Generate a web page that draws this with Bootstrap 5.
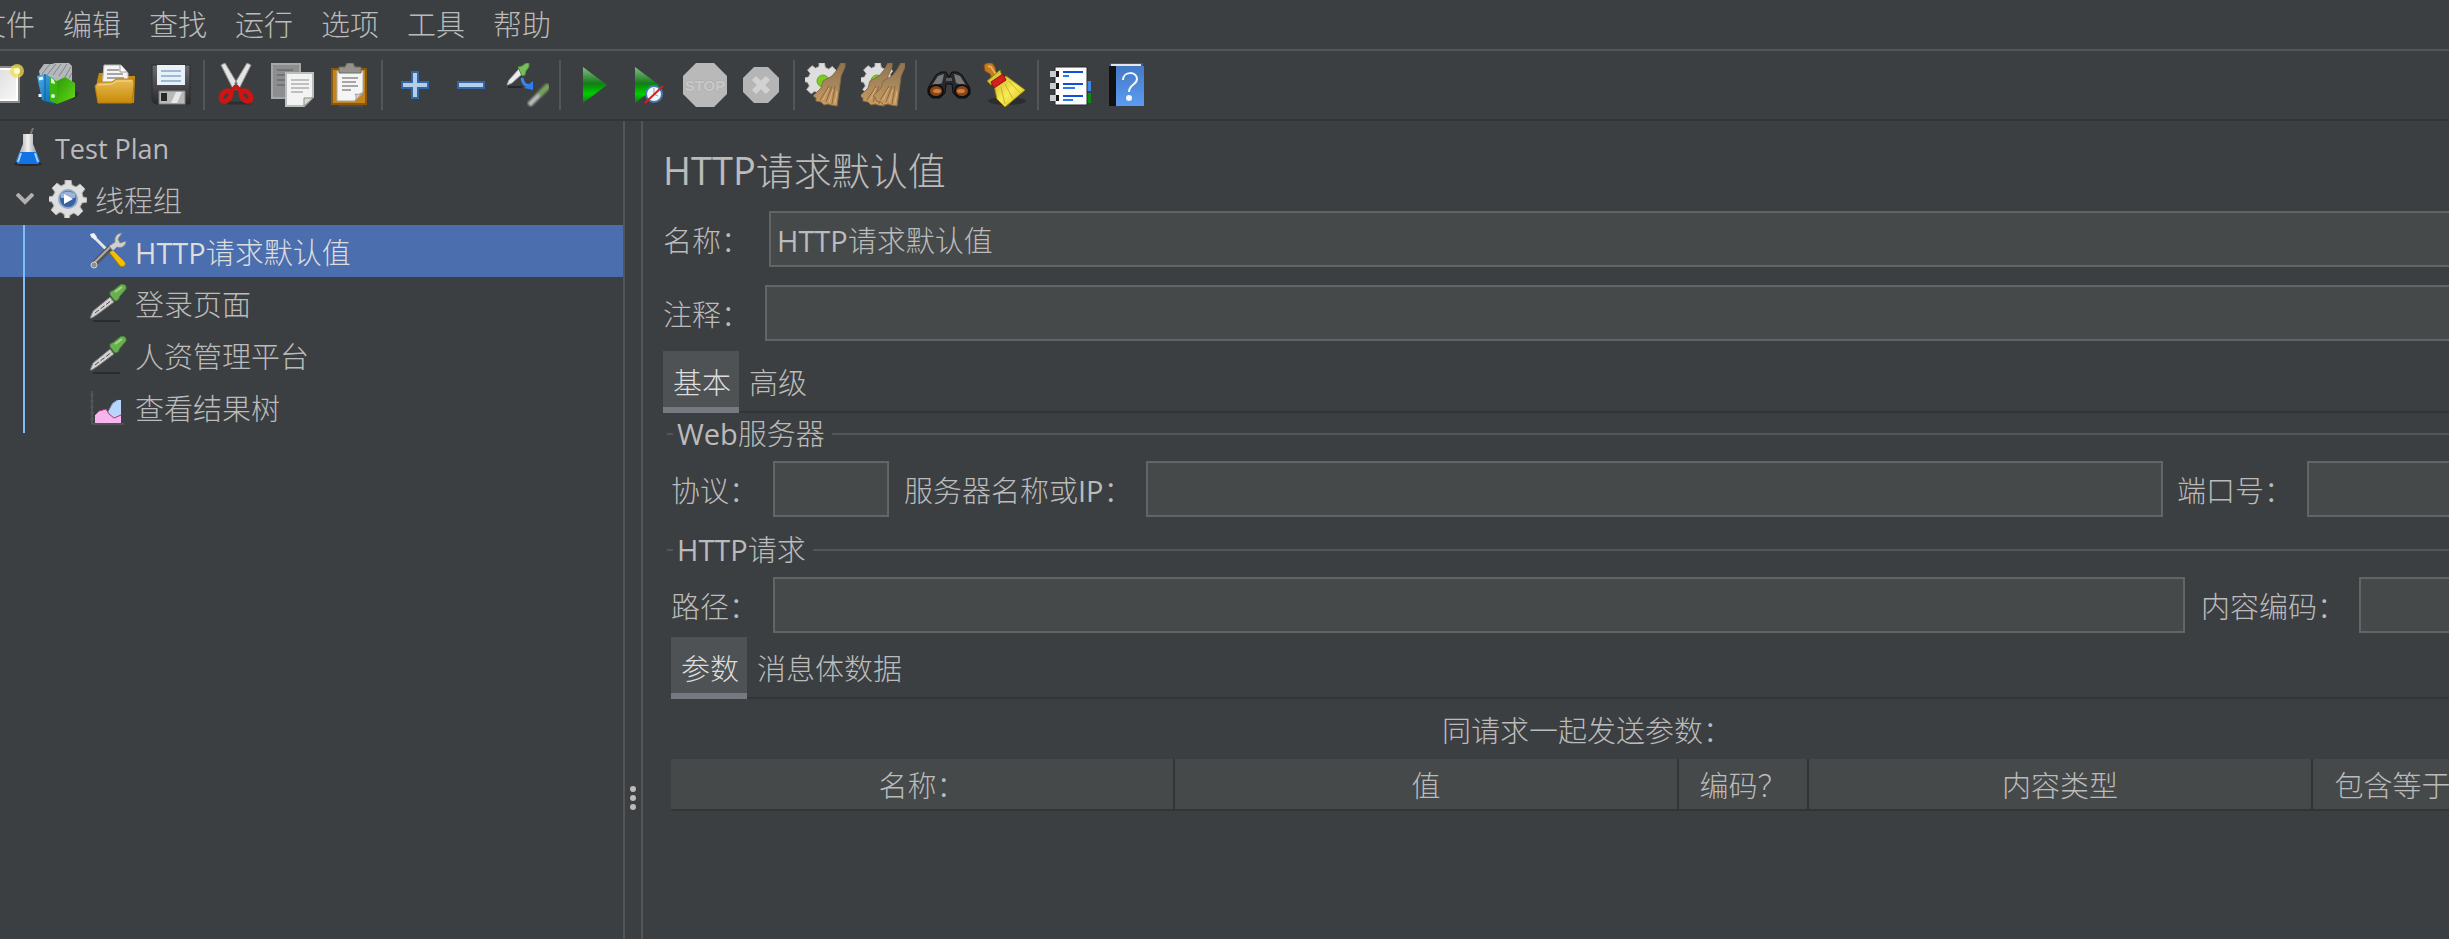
<!DOCTYPE html>
<html lang="zh-CN" data-bs-theme="dark">
<head>
<meta charset="utf-8">
<meta name="viewport" content="width=device-width, initial-scale=1">
<title>HTTP请求默认值 - Test Plan</title>
<link href="https://cdn.jsdelivr.net/npm/bootstrap@5.3.0/dist/css/bootstrap.min.css" rel="stylesheet">
<style>
  :root { --pane: #3c3f41; --ink: #bbbbbb; --rule: #555555; --edge: #323537; --field: #45494a; }
  body { background: var(--pane); color: var(--ink); font-family: "Open Sans", "Noto Sans CJK SC Light", "Noto Sans CJK SC", sans-serif; font-size: 29px; line-height: 40px; overflow: hidden; }
  .app-menu { height: 51px; margin-left: -37px; border-bottom: 2px solid var(--rule); }
  .app-menu .nav-link { color: var(--ink); padding: 5px 14px 4px; }
  .tools-bar { height: 70px; border-bottom: 2px solid var(--edge); }
  .tools-row { margin-left: -25px; }
  .tool { width: 56px; height: 56px; padding: 0; border: 0; background: none; flex: none; display: flex; align-items: center; justify-content: center; }
  .tool svg { width: 44px; height: 44px; }
  .tool-rule { width: 2px; height: 50px; margin: 0 4px; background: var(--rule); flex: none; }
  .tree-pane { flex: 0 0 625px; border-right: 2px solid var(--rule); }
  .tree-row { height: 52px; display: flex; align-items: center; gap: 8px; color: var(--ink); text-decoration: none; white-space: nowrap; }
  .tree-row span { padding-top: 3px; }
  .tree-row .latin { font-size: 27px; }
  .tree-row svg { width: 38px; height: 38px; flex: none; }
  .tree-row .twisty { width: 18px; height: 12px; margin-right: 7px; }
  .lvl-a { padding-left: 9px; }
  .lvl-b { padding-left: 16px; }
  .lvl-c { padding-left: 89px; }
  .tree-row.picked { background: #4b6eaf; color: #dddddd; }
  .tree-kids { position: relative; }
  .tree-kids::before { content: ""; position: absolute; left: 23px; top: 0; bottom: 0; width: 2px; background: #7cbcf8; }
  .splitter { flex: 0 0 18px; border-right: 2px solid var(--rule); }
  .splitter .above { flex: 31 0 0; }
  .splitter .below { flex: 6 0 0; }
  .grips { gap: 3px; }
  .grip { width: 6px; height: 6px; border-radius: 50%; background: var(--ink); }
  .editor { min-width: 0; }
  .editor-body { margin-right: -54px; padding: 20px 0 0 20px; }
  h1 { font-size: 38px; line-height: 58px; font-weight: 400; color: var(--ink); margin: 0 0 12px; }
  .form-control, .form-control:focus { background: var(--field); border: 2px solid #646464; border-radius: 0; height: 56px; padding: 0 6px; color: var(--ink); font-size: 29px; box-shadow: none; }
  label { white-space: nowrap; flex: none; padding-top: 3px; }
  .name-row { margin-bottom: 18px; }
  .note-row { margin-bottom: 10px; }
  .w-label { width: 102px; }
  .w-name { width: 106px; }
  .w-proto { flex: 0 0 116px; }
  .w-host { width: 257px; padding-left: 15px; }
  .w-port { width: 144px; padding-left: 14px; }
  .w-enc { width: 174px; padding-left: 16px; }
  .port-field { flex: 0 0 196px; }
  .enc-field { flex: 0 0 144px; }
  .tab-strip { border-bottom: 2px solid var(--edge); height: 62px; }
  .tab-strip button { border: 0; background: none; color: var(--ink); height: 62px; padding: 8px 8px 0 10px; border-bottom: 6px solid transparent; }
  .tab-strip button.active { background: #4e5254; border-bottom-color: #747a80; color: #dddddd; }
  fieldset { padding-left: 8px; }
  .second-group { margin-top: 12px; }
  .group-title { display: flex; align-items: center; gap: 4px; font-size: 29px; line-height: 42px; margin: 0 0 6px -4px; float: none; }
  .group-title::before { content: ""; width: 6px; height: 2px; background: var(--rule); }
  .group-title::after { content: ""; flex: 1; height: 2px; margin-left: 3px; background: var(--rule); }
  .params-title { padding: 12px 0 8px; }
  .params { table-layout: fixed; width: 100%; margin: 0; border-collapse: separate; border-spacing: 0; }
  .params th { background: var(--field); font-weight: 400; text-align: center; height: 52px; padding: 4px 0 0; line-height: 46px; white-space: nowrap; border-bottom: 2px solid var(--edge); border-right: 2px solid var(--edge); }
  .col-wide { width: 504px; }
  .col-code { width: 130px; }
</style>
</head>
<body>
<svg width="0" height="0" class="position-absolute" aria-hidden="true">
  <defs>
    <linearGradient id="gBlue" x1="0" y1="0" x2="1" y2="1"><stop offset="0" stop-color="#4db0ea"/><stop offset="1" stop-color="#0567b0"/></linearGradient>
    <linearGradient id="gLeaf" x1="0" y1="0" x2="1" y2="1"><stop offset="0" stop-color="#2a9a06"/><stop offset="1" stop-color="#66d818"/></linearGradient>
    <linearGradient id="gGold" x1="0" y1="0" x2="0" y2="1"><stop offset="0" stop-color="#e8bd55"/><stop offset="1" stop-color="#c88a08"/></linearGradient>
    <linearGradient id="gPlay" x1="0" y1="0" x2="0" y2="1"><stop offset="0" stop-color="#7fc184"/><stop offset=".45" stop-color="#187a1c"/><stop offset=".55" stop-color="#059a05"/><stop offset=".75" stop-color="#00cf00"/><stop offset="1" stop-color="#0c7a10"/></linearGradient>
    <linearGradient id="gSteel" x1="0" y1="0" x2="1" y2="0"><stop offset="0" stop-color="#8d8d8d"/><stop offset=".5" stop-color="#f2f2f2"/><stop offset="1" stop-color="#777"/></linearGradient>
    <linearGradient id="gDark" x1="0" y1="0" x2="0" y2="1"><stop offset="0" stop-color="#6a6a70"/><stop offset="1" stop-color="#2a2a2c"/></linearGradient>
    <linearGradient id="gPaper" x1="0" y1="0" x2="1" y2="1"><stop offset="0" stop-color="#d8d8d8"/><stop offset="1" stop-color="#fafafa"/></linearGradient>
    <linearGradient id="gBook" x1="0" y1="0" x2="0" y2="1"><stop offset="0" stop-color="#4479c4"/><stop offset="1" stop-color="#5b9cf0"/></linearGradient>
    <linearGradient id="gStraw" x1="0" y1="0" x2="0" y2="1"><stop offset="0" stop-color="#8f7350"/><stop offset=".5" stop-color="#a8875c"/><stop offset="1" stop-color="#cc9c60"/></linearGradient>
    <linearGradient id="gYellow" x1="0" y1="0" x2="1" y2="1"><stop offset="0" stop-color="#c8b018"/><stop offset=".5" stop-color="#f8ea58"/><stop offset="1" stop-color="#d4bc18"/></linearGradient>
    <filter id="soft"><feGaussianBlur stdDeviation="1"/></filter>
    <path id="cog" d="M16 0h6l1 5 4 2 4-3 5 5-3 4 1 4 4 1v4l-5 1-2 4 3 4-5 5-4-3-4 2-1 4h-4l-1-5-4-2-4 3-5-5 3-4-2-4-4-1v-4l5-1 2-4-3-4 5-5 4 3 4-2z"/>
    <g id="pipette">
      <path d="M4 37h27" stroke="#232527" stroke-width="2" opacity=".7"/>
      <path d="M1 34l3-7 17-14 4 5-16 12-6 4z" fill="#d2d2d2" stroke="#757575"/>
      <path d="M6 29l17-13" stroke="#4c4c4c" stroke-width="1" stroke-dasharray="5 2"/>
      <path d="M21 8l4-2 6-5c3-2 7 0 6 4l-6 7-2 4-3 1-5-6z" fill="#6bb050" stroke="#467c38"/>
      <path d="M26 8l7-5" stroke="#a0d880" stroke-width="2"/>
    </g>
    <g id="whisk">
      <path d="M38 0h4v4l-4 9-1 8-3 22-6-1-3-1-4 1-3-3-5-1 0-3-3-2 8-8 2-7 9-5 5-6z" fill="url(#gStraw)" stroke="#8b6c45" stroke-width="1"/>
      <path d="M17 37l9-14M23 39l6-16M29 41l3-18" stroke="#8d6a3c" stroke-width="1"/>
      <path d="M20 37l6-12M26 39l4-13M32 40l2-12" stroke="#dcb27a" stroke-width="1"/>
    </g>
  </defs>
</svg>

<div class="d-flex flex-column vh-100 overflow-hidden">
  <nav class="app-menu nav flex-nowrap text-nowrap flex-shrink-0" aria-label="主菜单">
    <a class="nav-link" href="#">文件</a>
    <a class="nav-link" href="#">编辑</a>
    <a class="nav-link" href="#">查找</a>
    <a class="nav-link" href="#">运行</a>
    <a class="nav-link" href="#">选项</a>
    <a class="nav-link" href="#">工具</a>
    <a class="nav-link" href="#">帮助</a>
  </nav>

  <div class="tools-bar d-flex align-items-center flex-shrink-0">
   <div class="tools-row d-flex align-items-center" role="toolbar" aria-label="工具栏">
    <button class="tool" type="button" aria-label="新建"><svg viewBox="0 0 44 44"><path d="M7 4h31v35H7z" fill="url(#gPaper)" stroke="#8b8d86" stroke-width="2"/><path d="M9 6h27v31H9z" fill="none" stroke="#fff" stroke-width="2"/><circle cx="36" cy="8" r="7" fill="#f0dc50" opacity=".75"/><circle cx="36" cy="8" r="3" fill="#fffbc8"/></svg></button>
    <button class="tool" type="button" aria-label="模板"><svg viewBox="0 0 44 44"><path d="M12 38l26-2 4-6-6-3z" fill="#2c2e30"/><path d="M2 8l5-7h8l3-1h14l3 3v16H4z" fill="#b4b8ba"/><path d="M5 11l8-10M10 12l9-11M16 12l8-11M22 13l8-12M28 14l6-10M32 15l3-5" stroke="#80868a" stroke-width="1"/><path d="M0 13l8-2 9 5v25l-12-4z" fill="url(#gBlue)"/><path d="M8 11v28" stroke="#0a5c9e" stroke-width="1"/><path d="M2 16l4-1M3 31v3" stroke="#e8f6ff" stroke-width="3"/><path d="M12 14l8 4v23l-7-3z" fill="#3cb510"/><path d="M20 18l8-4 10 6v14l-18 7z" fill="url(#gLeaf)"/><path d="M14 15l3 2 1 4-4-1z" fill="#dcffd0"/><circle cx="16" cy="33" r="2" fill="#e4ffe0"/></svg></button>
    <button class="tool" type="button" aria-label="打开"><svg viewBox="0 0 44 44"><path d="M6 10h8v26H4V18zM32 13h10l-1 27H10V20z" fill="#c68b0c"/><path d="M11 2h17l7 8v14H9z" fill="#f4f4f4" stroke="#b4b4b4"/><path d="M14 7h12M14 11h16M14 15h17" stroke="#a5a5a5" stroke-width="2"/><path d="M27 2v7h7" fill="#fff" stroke="#999"/><path d="M2 23l3-4h14l4-3h17l1 4-2 20H5z" fill="url(#gGold)" stroke="#ba7e08"/><path d="M5 22l14-1 5-3h15" fill="none" stroke="#f5d98c" stroke-width="1"/></svg></button>
    <button class="tool" type="button" aria-label="保存"><svg viewBox="0 0 44 44"><path d="M3 2h38v39H6l-3-3z" fill="url(#gDark)" stroke="#2c2c2e"/><path d="M8 2h28v20H8z" fill="#e8f0f8"/><path d="M12 8h20M12 13h20M12 18h20" stroke="#9eb9d4" stroke-width="2"/><path d="M10 28h26v13H10z" fill="#b9b9b9" stroke="#808080"/><path d="M12 30h6v8h-6z" fill="#29292b"/><path d="M22 40l5-11h6l-5 11z" fill="#e7e7e7"/></svg></button>
    <span class="tool-rule"></span>
    <button class="tool" type="button" aria-label="剪切"><svg viewBox="0 0 44 44"><path d="M12 40h24" stroke="#2c2e30" stroke-width="3"/><path d="M6 2l4-2 12 20v6h-4zM36 2l-4-2-12 20v6h4z" fill="#e4e4e2" stroke="#8e8e8c" stroke-width="1"/><g fill="none" stroke="#cf1414" stroke-width="5"><ellipse cx="11" cy="33" rx="4" ry="6" transform="rotate(40 11 33)"/><ellipse cx="31" cy="33" rx="4" ry="6" transform="rotate(-40 31 33)"/></g><path d="M15 30l5-6h2l5 6" fill="none" stroke="#cf1414" stroke-width="4"/></svg></button>
    <button class="tool" type="button" aria-label="复制"><svg viewBox="0 0 44 44"><path d="M1 1h28v34H1z" fill="#8c8e8f" stroke="#a6a7a8" stroke-width="2"/><path d="M6 7h16M6 12h10M6 17h10M6 22h8" stroke="#727475" stroke-width="2"/><path d="M15 10h27v24l-9 9H15z" fill="#f3f3f3" stroke="#bcbebc" stroke-width="2"/><path d="M20 17h18M20 21h18M20 25h18M20 29h12" stroke="#c0c0c0" stroke-width="2"/><path d="M33 43v-8h9z" fill="#d9dbd6" stroke="#8b8d84"/></svg></button>
    <button class="tool" type="button" aria-label="粘贴"><svg viewBox="0 0 44 44"><path d="M12 43h24" stroke="#53575a" stroke-width="1"/><path d="M5 6h34v35H5z" fill="#c3831f" stroke="#88590c" stroke-width="2"/><path d="M10 8h26v22l-8 8H10z" fill="#f5f5f5" stroke="#a9a9a9"/><path d="M15 15h16M15 19h14M15 23h16M15 27h9" stroke="#a6a6a6" stroke-width="2"/><path d="M28 38c2-3 1-6 0-7 3 1 6 0 8-2z" fill="#d7d7d7" stroke="#999"/><path d="M12 4h6l2-4h6l2 4h6v6H12z" fill="#93938b" stroke="#6c6d66" stroke-width="1"/></svg></button>
    <span class="tool-rule"></span>
    <button class="tool" type="button" aria-label="展开"><svg viewBox="0 0 44 44"><path d="M19 9h6v10h10v6H25v10h-6V25H9v-6h10z" fill="#b4cde8" stroke="#3465a4" stroke-width="2"/></svg></button>
    <button class="tool" type="button" aria-label="折叠"><svg viewBox="0 0 44 44"><path d="M9 19h26v6H9z" fill="#b4cde8" stroke="#3465a4" stroke-width="2"/></svg></button>
    <button class="tool" type="button" aria-label="切换"><svg viewBox="0 0 44 44"><path d="M3 24h14" stroke="#25282a" stroke-width="2"/><path d="M2 22l2-5L14 6l4 4L7 20z" fill="#ededed" stroke="#a6a6a6" stroke-width="1"/><path d="M13 4l4-1 4-3h3v4l-3 4-1 4-3 1z" fill="#79bd5c" stroke="#4a8938" stroke-width="1"/><path d="M17 15q1 8 8 8" fill="none" stroke="#3a86f2" stroke-width="3"/><path d="M28 27l-9-2 9-7z" fill="#2f7df4"/><g filter="url(#soft)"><path d="M24 42l12-12" stroke="#bcbcbc" stroke-width="5"/><path d="M34 32l10-10" stroke="#76a15e" stroke-width="6"/></g></svg></button>
    <span class="tool-rule"></span>
    <button class="tool" type="button" aria-label="启动"><svg viewBox="0 0 44 44"><path d="M12 4l24 18-24 18z" fill="url(#gPlay)"/></svg></button>
    <button class="tool" type="button" aria-label="不停顿开始"><svg viewBox="0 0 44 44"><path d="M8 4l24 18L8 40z" fill="url(#gPlay)"/><circle cx="27" cy="31" r="8" fill="#f1f6fb" stroke="#3f7dbc" stroke-width="2"/><path d="M27 25v6l4 2" fill="none" stroke="#999"/><path d="M18 40l18-17" stroke="#d21f1f" stroke-width="2"/></svg></button>
    <button class="tool" type="button" aria-label="停止"><svg viewBox="0 0 44 44"><path d="M13 0h18l13 13v18L31 44H13L0 31V13z" fill="#b9b9b9"/><text x="22" y="28" text-anchor="middle" font-family="Liberation Sans" font-weight="700" font-size="15" fill="#c8c8c8" stroke="#adadad" stroke-width="1" paint-order="stroke">STOP</text></svg></button>
    <button class="tool" type="button" aria-label="关闭"><svg viewBox="0 0 44 44"><path d="M15 4h14l11 11v14L29 40H15L4 29V15z" fill="#b5b5b5"/><path d="M15 15l14 14M29 15L15 29" stroke="#d2d2d2" stroke-width="6"/></svg></button>
    <span class="tool-rule"></span>
    <button class="tool" type="button" aria-label="清除"><svg viewBox="0 0 44 44"><use href="#cog" fill="#dedede" stroke="#bdbdbd" transform="scale(.88)"/><circle cx="18" cy="18" r="6" fill="#7ccb24" stroke="#62a51c"/><use href="#whisk" x="-2"/></svg></button>
    <button class="tool" type="button" aria-label="清除全部"><svg viewBox="0 0 44 44"><use href="#cog" fill="#dedede" stroke="#bdbdbd" transform="scale(.88)"/><circle cx="16" cy="18" r="6" fill="#7ccb24" stroke="#62a51c"/><use href="#whisk" x="-11"/><use href="#whisk" x="2"/></svg></button>
    <span class="tool-rule"></span>
    <button class="tool" type="button" aria-label="查找"><svg viewBox="0 0 44 44"><path d="M14 9h5l3 5 3-5h5l5 3 8 13v6l-4 4h-8l-5-5-1-9h-6l-1 9-5 5H5l-4-4v-6L9 12z" fill="#28292b" stroke="#0c0c0c"/><path d="M11 13l6-2-2 9-11 4zM33 13l-6-2 2 9 11 4z" fill="#77797b"/><path d="M19 15h6v3h-6z" fill="#5a5c5e"/><ellipse cx="9" cy="28" rx="7" ry="6" fill="#8a4614" stroke="#101010" stroke-width="2"/><ellipse cx="35" cy="28" rx="7" ry="6" fill="#8a4614" stroke="#101010" stroke-width="2"/><ellipse cx="10" cy="28" rx="4" ry="2" fill="#c98044"/><ellipse cx="34" cy="28" rx="4" ry="2" fill="#c98044"/></svg></button>
    <button class="tool" type="button" aria-label="重置搜索"><svg viewBox="0 0 44 44"><ellipse cx="24" cy="38" rx="19" ry="4" fill="#2b2d2f"/><path d="M1 2l3-2h5l3 4 1 5 4 4-7 5-3-7-5-3z" fill="#c47a20" stroke="#8a5210"/><path d="M5 3l3 1 6 9" fill="none" stroke="#e9ac5a" stroke-width="2"/><path d="M4 18l13-11 2 6-11 9z" fill="#d8c634" stroke="#8f7f0c"/><path d="M11 22l12-9 19 14-20 17-8-8z" fill="url(#gYellow)" stroke="#a4920c"/><path d="M18 24l4 17M22 21l8 15M26 18l11 12" stroke="#c9b62a" stroke-width="1"/><path d="M8 19l12-8 3 6-12 8z" fill="#d22020" stroke="#9c0c0c"/></svg></button>
    <span class="tool-rule"></span>
    <button class="tool" type="button" aria-label="函数助手"><svg viewBox="0 0 44 44"><path d="M36 18h6v10h-6z" fill="#3f86ea"/><path d="M36 30h6v10h-6z" fill="#0a8a14"/><path d="M6 4h32v38H6z" fill="#fdfdfd" stroke="#26282a" stroke-width="1"/><path d="M1 8h9v6H1zM1 20h9v6H1zM1 32h9v6H1z" fill="#ccc"/><path d="M7 8h3v6H7zM7 20h3v6H7zM7 32h3v6H7z" fill="#161616"/><path d="M14 9h20M14 21h20M14 33h20" stroke="#0f4fe0" stroke-width="2"/><path d="M14 13h6M14 25h12M14 37h10" stroke="#2f79f0" stroke-width="2"/></svg></button>
    <button class="tool" type="button" aria-label="帮助"><svg viewBox="0 0 44 44"><path d="M4 2l2-2h32v2l1 3v38H5z" fill="#2f5f9e"/><path d="M11 3h28v40H11z" fill="url(#gBook)"/><path d="M4 3h7v40H4z" fill="#111214"/><path d="M6 2h30" stroke="#e6e6ea" stroke-width="2"/><path d="M18 17c0-9 14-9 14-1 0 6-8 5-8 13" fill="none" stroke="#f2f7ff" stroke-width="2"/><circle cx="24" cy="35" r="3" fill="#f2f7ff"/></svg></button>
   </div>
  </div>

  <div class="d-flex flex-grow-1 overflow-hidden">
    <aside class="tree-pane">
      <a class="tree-row lvl-a" href="#"><svg viewBox="0 0 38 38"><ellipse cx="19" cy="36" rx="14" ry="2" fill="#26282b"/><path d="M21 8l3-8" stroke="#777" stroke-width="2"/><path d="M14 6h10v10l7 17-2 3H9l-2-3 7-17z" fill="url(#gSteel)"/><path d="M11 24h16l4 9-2 3H9l-2-3z" fill="#1274e2"/><path d="M12 25l-3 9M26 25l3 9" stroke="#a9d0f8" stroke-width="2"/></svg><span class="latin">Test Plan</span></a>
      <a class="tree-row lvl-b" href="#"><svg class="twisty" viewBox="0 0 18 12"><path d="M1 1l8 8 8-8" fill="none" stroke="#b0b0b0" stroke-width="4"/></svg><svg viewBox="0 0 38 38"><use href="#cog" fill="#dedede" stroke="#adadad"/><circle cx="19" cy="19" r="9" fill="#3862a2" stroke="#8ea6c8" stroke-width="2"/><path d="M12 14q7-5 14 0v4H12z" fill="#9db4d4"/><path d="M15 14l9 5-9 5z" fill="#fff"/></svg><span>线程组</span></a>
      <div class="tree-kids">
        <a class="tree-row lvl-c picked" href="#" aria-current="true"><svg viewBox="0 0 38 38"><path d="M3 3l17 17" stroke="#e6e6e6" stroke-width="3"/><path d="M1 2l4-1 3 4-2 3-4-3z" fill="#f3f3f3"/><path d="M20 20l4-2 11 11c4 4-1 7-4 5z" fill="#f3bd08" stroke="#a37c00"/><path d="M4 33l19-19" stroke="#555" stroke-width="6"/><path d="M5 31l17-17" stroke="#adadad" stroke-width="2"/><circle cx="5" cy="33" r="3" fill="#8e8e8e" stroke="#d0d0d0"/><path d="M20 14l6-4c-1-5 2-9 7-9l-4 6 2 4 6-2c0 5-5 8-9 6l-4 4z" fill="#cfcfcf" stroke="#858585"/></svg><span>HTTP请求默认值</span></a>
        <a class="tree-row lvl-c" href="#"><svg viewBox="0 0 38 38"><use href="#pipette"/></svg><span>登录页面</span></a>
        <a class="tree-row lvl-c" href="#"><svg viewBox="0 0 38 38"><use href="#pipette"/></svg><span>人资管理平台</span></a>
        <a class="tree-row lvl-c" href="#"><svg viewBox="0 0 38 38"><path d="M3 3v33h32" fill="none" stroke="#6b6570" stroke-width="1"/><path d="M1 7h4M1 13h4M1 19h4M1 25h4M1 31h4" stroke="#5b5560"/><path d="M19 24l4-8 5-4h4v20H19z" fill="#b9d6fa"/><path d="M20 22l4-7 5-3" fill="none" stroke="#6f9ce0" stroke-width="1"/><path d="M6 35v-8l4-4 7-2 3 5 5 5 4-4h3v8z" fill="#f4b6ec"/><path d="M6 27l4-4 7-2 3 5 5 4 7-3" fill="none" stroke="#b8306c" stroke-width="1"/></svg><span>查看结果树</span></a>
      </div>
    </aside>

    <div class="splitter d-flex flex-column align-items-center">
      <span class="above"></span>
      <span class="grips d-flex flex-column"><i class="grip"></i><i class="grip"></i><i class="grip"></i></span>
      <span class="below"></span>
    </div>

    <main class="editor flex-grow-1 overflow-hidden">
      <form class="editor-body">
        <h1>HTTP请求默认值</h1>
        <div class="d-flex align-items-center name-row"><label class="w-name" for="f-name">名称：</label><input id="f-name" class="form-control" type="text" value="HTTP请求默认值"></div>
        <div class="d-flex align-items-center note-row"><label class="w-label" for="f-note">注释：</label><input id="f-note" class="form-control" type="text"></div>
        <div class="tab-strip d-flex" role="tablist">
          <button class="active" type="button" role="tab" aria-selected="true">基本</button>
          <button type="button" role="tab" aria-selected="false">高级</button>
        </div>
        <fieldset>
          <legend class="group-title">Web服务器</legend>
          <div class="d-flex align-items-center">
            <label class="w-label" for="f-proto">协议：</label><input id="f-proto" class="form-control w-proto" type="text">
            <label class="w-host" for="f-host">服务器名称或IP：</label><input id="f-host" class="form-control" type="text">
            <label class="w-port" for="f-port">端口号：</label><input id="f-port" class="form-control port-field" type="text">
          </div>
        </fieldset>
        <fieldset class="second-group">
          <legend class="group-title">HTTP请求</legend>
          <div class="d-flex align-items-center">
            <label class="w-label" for="f-path">路径：</label><input id="f-path" class="form-control" type="text">
            <label class="w-enc" for="f-enc">内容编码：</label><input id="f-enc" class="form-control enc-field" type="text">
          </div>
          <div class="tab-strip d-flex mt-1" role="tablist">
            <button class="active" type="button" role="tab" aria-selected="true">参数</button>
            <button type="button" role="tab" aria-selected="false">消息体数据</button>
          </div>
          <div class="text-center params-title">同请求一起发送参数：</div>
          <table class="params">
            <colgroup><col class="col-wide"><col class="col-wide"><col class="col-code"><col class="col-wide"><col></colgroup>
            <thead><tr><th scope="col">名称：</th><th scope="col">值</th><th scope="col">编码？</th><th scope="col">内容类型</th><th scope="col">包含等于？</th></tr></thead>
          </table>
        </fieldset>
      </form>
    </main>
  </div>
</div>
<script src="https://cdn.jsdelivr.net/npm/bootstrap@5.3.0/dist/js/bootstrap.bundle.min.js"></script>
</body>
</html>
